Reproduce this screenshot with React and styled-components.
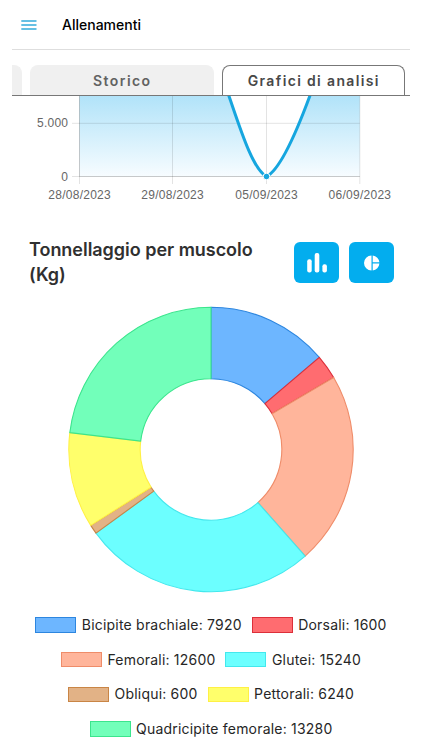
import React from "react";
import styled, { createGlobalStyle } from "styled-components";

const GlobalStyle = createGlobalStyle`
  * { box-sizing: border-box; }
  html, body { margin: 0; background: #fff; }
  body { width: 422px; height: 750px; overflow: hidden; font-family: Inter, "Liberation Sans", sans-serif; }
`;

const Page = styled.main`
  width: 422px;
  height: 750px;
  overflow: hidden;
  display: flex;
  flex-direction: column;
`;

const Header = styled.header`
  flex: none;
  height: 50px;
  margin: 0 12px;
  padding-left: 9px;
  display: flex;
  align-items: center;
  gap: 25px;
  border-bottom: 1px solid #dedede;
`;

const MenuIcon = styled.svg`
  display: block;
  width: 16px;
  height: 12px;
`;

const MenuButton = styled.button`
  padding: 0;
  border: 0;
  background: none;
`;

const PageName = styled.h1`
  margin: 0;
  font-size: 14px;
  line-height: 18px;
  font-weight: 500;
  letter-spacing: 0;
  color: #000;
`;

const Tabs = styled.nav`
  flex: none;
  height: 46px;
  margin: 0 12px;
  padding-top: 15px;
  display: flex;
  gap: 8px;
  overflow: hidden;
  border-bottom: 1px solid #777;
`;

const Tab = styled.button`
  flex: none;
  width: ${(p) => p.$width}px;
  height: 30px;
  padding: 0;
  border: 1px solid ${(p) => (p.$active ? "#777" : "#f0f0f0")};
  border-bottom: 0;
  border-radius: ${(p) => (p.$clipped ? "0 8px 0 0" : "8px 8px 0 0")};
  background: ${(p) => (p.$active ? "#fff" : "#f0f0f0")};
  color: ${(p) => (p.$active ? "#484848" : "#626262")};
  font: 600 14px/30px Inter, sans-serif;
  letter-spacing: ${(p) => p.$spacing}px;
`;

const LineChart = styled.svg`
  flex: none;
  display: block;
  width: 422px;
  height: 110px;
  text { font: 12px "Liberation Sans", Arial, sans-serif; fill: #666; }
`;

const SectionHead = styled.section`
  flex: none;
  display: flex;
  justify-content: space-between;
  height: 86px;
  padding: 31px 28px 0 29px;
`;

const SectionTitle = styled.h2`
  margin: 0;
  width: 240px;
  font-size: 18px;
  line-height: 25px;
  font-weight: 600;
  letter-spacing: -0.03px;
  color: #303030;
`;

const Actions = styled.div`
  display: flex;
  gap: 10px;
  padding-top: 5px;
`;

const ActionButton = styled.button`
  width: 45px;
  height: 41px;
  padding: 0;
  border: 0;
  border-radius: 6px;
  background: #03adee;
  display: grid;
  place-items: center;
  svg { display: block; }
`;

const Donut = styled.svg`
  flex: none;
  display: block;
  width: 422px;
  height: 322px;
`;

const Legend = styled.div`
  flex: none;
  display: flex;
  flex-direction: column;
`;

const LegendRow = styled.div`
  height: 34.67px;
  display: flex;
  justify-content: center;
  align-items: flex-start;
  gap: 10px;
`;

const LegendItem = styled.div`
  display: flex;
  align-items: center;
  gap: 5.5px;
  height: 22px;
  font-size: 14px;
  line-height: 22px;
  font-weight: 400;
  letter-spacing: 0.2px;
  color: #262626;
  white-space: nowrap;
`;

const Swatch = styled.span`
  width: 41px;
  height: 15.5px;
  background: ${(p) => p.$fill};
  border: 1px solid ${(p) => p.$line};
`;

const muscles = [
  { name: "Bicipite brachiale", value: 7920, fill: "#6db6ff", line: "#2d86df" },
  { name: "Dorsali", value: 1600, fill: "#ff6c70", line: "#dc2f3a" },
  { name: "Femorali", value: 12600, fill: "#ffb59b", line: "#ef8c69" },
  { name: "Glutei", value: 15240, fill: "#6cffff", line: "#43e8ed" },
  { name: "Obliqui", value: 600, fill: "#e2b286", line: "#c98545" },
  { name: "Pettorali", value: 6240, fill: "#ffff6b", line: "#fff044" },
  { name: "Quadricipite femorale", value: 13280, fill: "#72ffba", line: "#3be58d" },
];
const legendRows = [muscles.slice(0, 2), muscles.slice(2, 4), muscles.slice(4, 6), muscles.slice(6)];

const total = muscles.reduce((sum, m) => sum + m.value, 0);
const CX = 211;
const CY = 157.5;
const OUTER = 142.2;
const INNER = 70.8;

const point = (radius, fraction) => {
  const angle = fraction * Math.PI * 2;
  return `${(CX + radius * Math.sin(angle)).toFixed(2)} ${(CY - radius * Math.cos(angle)).toFixed(2)}`;
};

const slices = muscles.map((m, i) => {
  const start = muscles.slice(0, i).reduce((sum, x) => sum + x.value, 0) / total;
  const end = start + m.value / total;
  return {
    ...m,
    d: `M${point(OUTER, start)}A${OUTER} ${OUTER} 0 0 1 ${point(OUTER, end)}L${point(INNER, end)}A${INNER} ${INNER} 0 0 0 ${point(INNER, start)}Z`,
  };
});

const dates = [
  ["28/08/2023", 79.5],
  ["29/08/2023", 172.5],
  ["05/09/2023", 266.5],
  ["06/09/2023", 359.8],
];

export default function App() {
  return (
    <Page>
      <GlobalStyle />
      <Header>
        <MenuButton aria-label="Menu">
          <MenuIcon viewBox="0 0 16 12">
            <path d="M.3 2H15.5M.3 6H15.5M.3 10H15.5" stroke="#34acdc" strokeWidth="1.3" />
          </MenuIcon>
        </MenuButton>
        <PageName>Allenamenti</PageName>
      </Header>
      <Tabs>
        <Tab $width={10.4} $clipped aria-label="Precedente" />
        <Tab $width={183.8} $spacing={1.45}>Storico</Tab>
        <Tab $width={183.2} $spacing={1.35} $active>Grafici di analisi</Tab>
      </Tabs>
      <LineChart viewBox="0 0 422 110">
        <defs>
          <linearGradient id="area" x1="0" y1="0" x2="0" y2="80.5" gradientUnits="userSpaceOnUse">
            <stop offset="0" stopColor="#b1e3f9" />
            <stop offset="1" stopColor="#f7fcff" />
          </linearGradient>
        </defs>
        <path d="M79.5 0H228.8C240 32 253 74 266.5 80.5C280 74 298 32 310 0H359.8V80.5H79.5Z" fill="url(#area)" />
        <g stroke="#000" strokeOpacity=".11">
          <path d="M72 27.3H359.8M72 80.5H359.8" />
          {dates.map(([label, x]) => <path key={label} d={`M${x} 0V88`} />)}
          <path d="M79.5 0V80.5M79.5 80.5H359.8" />
        </g>
        <path d="M228.8 -.5C240 32 253 74 266.5 80.5C280 74 298 32 310 -.5" fill="none" stroke="#16a6df" strokeWidth="3" />
        <circle cx="266.5" cy="80.5" r="3.3" fill="#16a6df" stroke="#fff" strokeWidth="1" />
        <text x="68" y="31.3" textAnchor="end" textLength="31">5.000</text>
        <text x="68" y="84.6" textAnchor="end">0</text>
        {dates.map(([label, x]) => (
          <text key={label} x={x} y="103" textAnchor="middle" textLength="62.5">{label}</text>
        ))}
      </LineChart>
      <SectionHead>
        <SectionTitle>Tonnellaggio per muscolo (Kg)</SectionTitle>
        <Actions>
          <ActionButton aria-label="Grafico a barre">
            <svg width="22" height="22" viewBox="0 0 22 22" fill="#fff">
              <rect x="1.2" y="7.3" width="4.5" height="13.2" rx="2" />
              <rect x="8.7" y="1" width="4.6" height="19.5" rx="2" />
              <rect x="16.4" y="12.3" width="4.5" height="8.2" rx="2" />
            </svg>
          </ActionButton>
          <ActionButton aria-label="Grafico a torta">
            <svg width="16" height="16" viewBox="0 0 16 16" fill="#fff">
              <path d="M7.5.5V15.5A7.5 7.5 0 0 1 7.5.5ZM8.7.5A7.5 7.5 0 0 1 15.4 7.3H8.7ZM8.7 8.6H15.4A7.5 7.5 0 0 1 8.7 15.5Z" />
            </svg>
          </ActionButton>
        </Actions>
      </SectionHead>
      <Donut viewBox="0 0 422 322">
        {slices.map((s) => (
          <path key={s.name} d={s.d} fill={s.fill} stroke={s.line} strokeWidth="1.1" strokeLinejoin="round" />
        ))}
      </Donut>
      <Legend>
        {legendRows.map((row) => (
          <LegendRow key={row[0].name}>
            {row.map((m) => (
              <LegendItem key={m.name}>
                <Swatch $fill={m.fill} $line={m.line} />
                {`${m.name}: ${m.value}`}
              </LegendItem>
            ))}
          </LegendRow>
        ))}
      </Legend>
    </Page>
  );
}
